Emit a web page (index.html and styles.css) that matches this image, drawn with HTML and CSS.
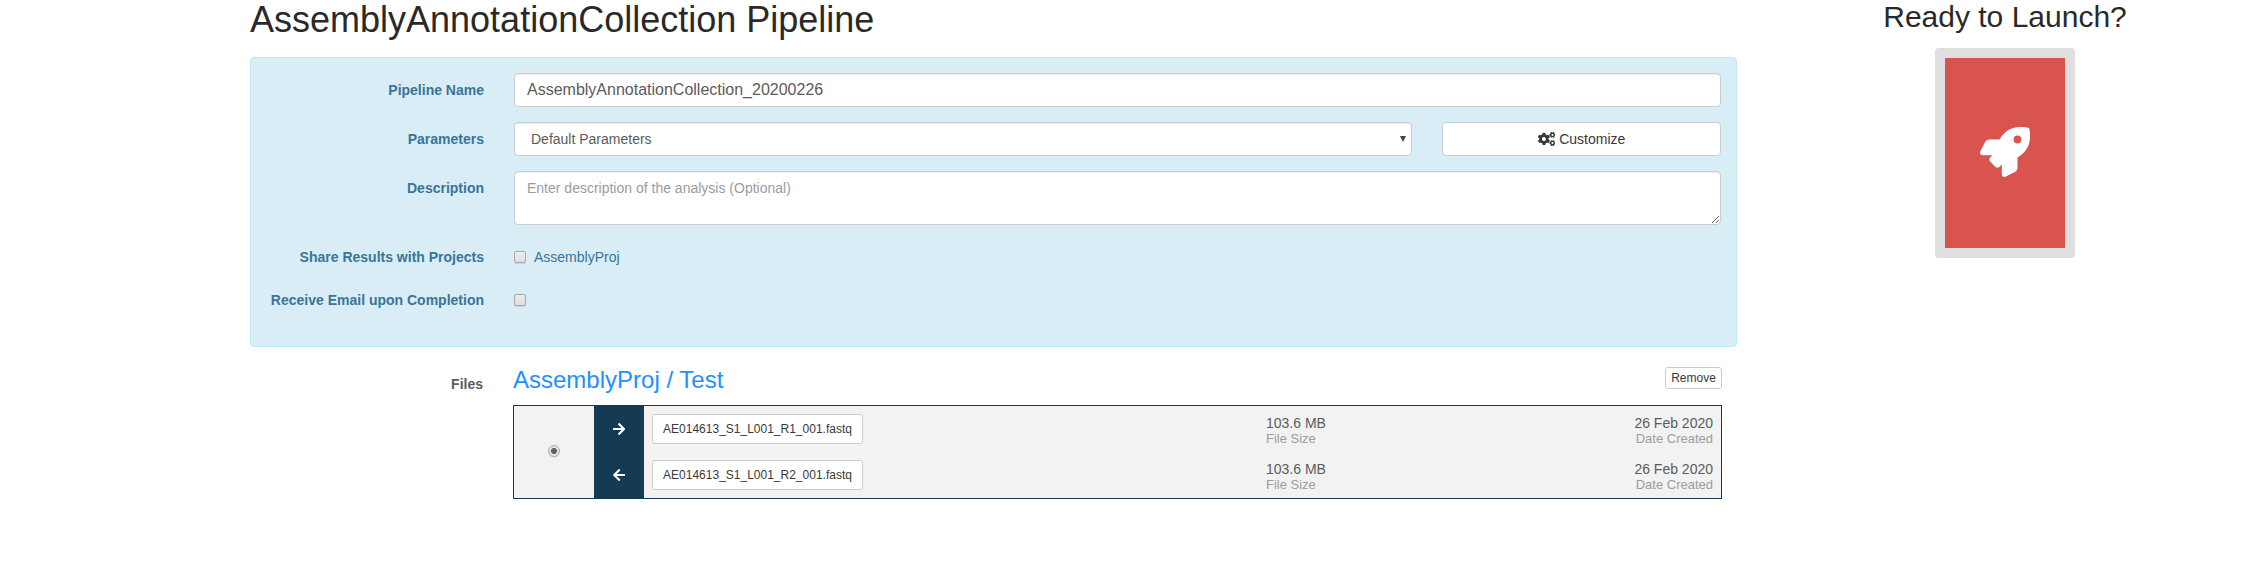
FILE: index.html
```html
<!DOCTYPE html>
<html lang="en">
<head>
<meta charset="utf-8">
<title>AssemblyAnnotationCollection Pipeline</title>
<link rel="stylesheet" href="styles.css">
</head>
<body>
<main class="page">
  <section class="pipeline">
    <h1 class="title">AssemblyAnnotationCollection Pipeline</h1>
    <form class="panel">
      <div class="row">
        <label class="label" for="name">Pipeline Name</label>
        <input class="control control-name" id="name" type="text" value="AssemblyAnnotationCollection_20200226">
      </div>
      <div class="row">
        <span class="label">Parameters</span>
        <div class="split">
          <div class="control select"><span>Default Parameters</span>
            <svg class="caret" viewBox="0 0 6 6"><path d="M0 0h6L3 6z"/></svg>
          </div>
          <button class="btn customize" type="button">
            <svg class="cogs" viewBox="0 0 640 512">
              <path id="small-cog" d="M512.1 191l-8.2 14.3c-3 5.3-9.4 7.5-15.1 5.4-11.8-4.4-22.6-10.7-32.1-18.6-4.6-3.8-5.8-10.5-2.8-15.7l8.2-14.3c-6.9-8-12.3-17.3-15.9-27.4h-16.5c-6 0-11.2-4.3-12.2-10.3-2-12-2.1-24.6 0-37.1 1-6 6.2-10.4 12.2-10.4h16.5c3.6-10.1 9-19.4 15.9-27.4l-8.2-14.3c-3-5.2-1.9-11.9 2.8-15.7 9.5-7.9 20.4-14.2 32.1-18.6 5.7-2.1 12.1.1 15.1 5.4l8.2 14.3c10.5-1.9 21.2-1.9 31.7 0L552 6.3c3-5.3 9.4-7.5 15.1-5.4 11.8 4.4 22.6 10.7 32.1 18.6 4.6 3.8 5.8 10.5 2.8 15.7l-8.2 14.3c6.9 8 12.3 17.3 15.9 27.4h16.5c6 0 11.2 4.3 12.2 10.3 2 12 2.1 24.6 0 37.1-1 6-6.2 10.4-12.2 10.4h-16.5c-3.6 10.1-9 19.4-15.9 27.4l8.2 14.3c3 5.2 1.9 11.9-2.8 15.7-9.5 7.9-20.4 14.2-32.1 18.6-5.7 2.1-12.1-.1-15.1-5.4l-8.2-14.3c-10.4 1.9-21.2 1.9-31.7 0zm-10.5-58.8c38.5 29.6 82.4-14.3 52.8-52.8-38.5-29.7-82.4 14.3-52.8 52.8z"/>
              <use href="#small-cog" y="299"/>
              <path d="M386.3 286.1l33.7 16.8c10.1 5.8 14.5 18.1 10.5 29.1-8.9 24.2-26.4 46.4-42.6 65.8-7.4 8.9-20.2 11.1-30.3 5.3l-29.1-16.8c-16 13.7-34.6 24.6-54.9 31.7v33.6c0 11.6-8.3 21.6-19.7 23.6-24.6 4.2-50.4 4.4-75.9 0-11.5-2-20-11.9-20-23.6V418c-20.3-7.2-38.9-18-54.9-31.7L74 403c-10 5.8-22.9 3.6-30.3-5.3-16.2-19.4-33.3-41.6-42.2-65.7-4-10.9.4-23.2 10.5-29.1l33.3-16.8c-3.9-20.9-3.9-42.4 0-63.4L12 205.8c-10.1-5.8-14.6-18.1-10.5-29 8.9-24.2 26-46.4 42.2-65.8 7.4-8.9 20.2-11.1 30.3-5.3l29.1 16.8c16-13.7 34.6-24.6 54.9-31.7V57.1c0-11.5 8.2-21.5 19.6-23.5 24.6-4.2 50.5-4.4 76-.1 11.5 2 20 11.9 20 23.6v33.6c20.3 7.2 38.9 18 54.9 31.7l29.1-16.8c10-5.8 22.9-3.6 30.3 5.3 16.2 19.4 33.2 41.6 42.1 65.8 4 10.9.1 23.2-10 29.1l-33.7 16.8c3.9 21 3.9 42.5 0 63.5zm-117.6 21.1c59.2-77-28.7-164.9-105.7-105.7-59.2 77 28.7 164.9 105.7 105.7z"/>
            </svg>Customize</button>
        </div>
      </div>
      <div class="row">
        <label class="label" for="description">Description</label>
        <textarea class="control description" id="description" placeholder="Enter description of the analysis (Optional)"></textarea>
      </div>
      <div class="row row-check">
        <span class="label">Share Results with Projects</span>
        <label class="check-line"><input class="check" type="checkbox">AssemblyProj</label>
      </div>
      <div class="row row-check">
        <label class="label" for="email">Receive Email upon Completion</label>
        <div class="check-line"><input class="check" id="email" type="checkbox"></div>
      </div>
    </form>

    <div class="files">
      <span class="label files-label">Files</span>
      <div class="files-body">
        <div class="files-head">
          <h3 class="project">AssemblyProj / Test</h3>
          <button class="btn remove" type="button">Remove</button>
        </div>
        <div class="pair">
          <div class="pick"><input class="radio" type="radio" checked></div>
          <div class="arrows">
            <div class="arrow-cell"><svg class="arrow" viewBox="0 0 448 512"><path d="M190.5 66.9l22.2-22.2c9.4-9.4 24.6-9.4 33.9 0L441 239c9.4 9.4 9.4 24.6 0 33.9L246.6 467.3c-9.4 9.4-24.6 9.4-33.9 0l-22.2-22.2c-9.5-9.5-9.3-25 .4-34.3L311.4 296H24c-13.3 0-24-10.7-24-24v-32c0-13.3 10.7-24 24-24h287.4L190.9 101.2c-9.8-9.3-10-24.8-.4-34.3z"/></svg></div>
            <div class="arrow-cell"><svg class="arrow" viewBox="0 0 448 512"><path d="M257.5 445.1l-22.2 22.2c-9.4 9.4-24.6 9.4-33.9 0L7 273c-9.4-9.4-9.4-24.6 0-33.9L201.4 44.7c9.4-9.4 24.6-9.4 33.9 0l22.2 22.2c9.5 9.5 9.3 25-.4 34.3L136.6 216H424c13.3 0 24 10.7 24 24v32c0 13.3-10.7 24-24 24H136.6l120.5 114.8c9.8 9.3 10 24.8.4 34.3z"/></svg></div>
          </div>
          <div class="entries">
            <div class="entry">
              <div><button class="btn file" type="button">AE014613_S1_L001_R1_001.fastq</button></div>
              <div class="meta">103.6 MB<small>File Size</small></div>
              <div class="meta meta-date">26 Feb 2020<small>Date Created</small></div>
            </div>
            <div class="entry">
              <div><button class="btn file" type="button">AE014613_S1_L001_R2_001.fastq</button></div>
              <div class="meta">103.6 MB<small>File Size</small></div>
              <div class="meta meta-date">26 Feb 2020<small>Date Created</small></div>
            </div>
          </div>
        </div>
      </div>
    </div>
  </section>

  <aside class="launch">
    <h2 class="launch-title">Ready to Launch?</h2>
    <button class="launch-btn" type="button" aria-label="Launch">
      <svg class="rocket" viewBox="0 0 512 512"><path d="M505.12 19.094c-1.189-5.531-6.658-11-12.207-12.188C460.716 0 435.507 0 410.407 0 307.175 0 245.269 55.203 199.052 128H94.838c-16.348.016-35.557 11.875-42.887 26.484L2.516 253.297A28.4 28.4 0 0 0 0 264a24.009 24.009 0 0 0 24.006 24h103.81l-22.474 22.469c-11.366 11.361-12.996 32.258 0 45.25l50.904 50.906c11.156 11.188 32.156 13.156 45.277 0l22.475-22.469V488a24.009 24.009 0 0 0 24.006 24 28.56 28.56 0 0 0 10.707-2.516l98.728-49.39c14.629-7.297 26.508-26.5 26.508-42.86V312.797c72.597-46.313 128.035-108.406 128.035-211.094.093-25.203.093-50.406-6.862-82.609zM384.04 168A40 40 0 1 1 424.05 128 40.023 40.023 0 0 1 384.04 168z"/></svg>
    </button>
  </aside>
</main>
</body>
</html>
```
FILE: styles.css
```css
* {
  box-sizing: border-box;
}

body {
  margin: 0;
  background: #fff;
  color: #5b5b5b;
  font: 14px/20px "Liberation Sans", Arial, sans-serif;
}

button,
input,
textarea {
  margin: 0;
  font-family: inherit;
}

.page {
  display: flex;
  height: 578px;
  padding-left: 250px;
  overflow: hidden;
}

.pipeline {
  flex: none;
  width: 1487px;
}

.title,
.launch-title,
.project {
  margin: 0;
  font-weight: 400;
  white-space: nowrap;
}

.title {
  height: 57px;
  color: #292929;
  font-size: 36px;
  line-height: 40px;
}

.panel {
  display: flex;
  flex-direction: column;
  gap: 15px;
  height: 290px;
  padding: 15px;
  background: #d9edf6;
  border: 1px solid #bce8f1;
  border-radius: 4px;
  color: #377599;
}

.row {
  display: grid;
  grid-template-columns: 218px 1207px;
  column-gap: 30px;
}

.row-check {
  height: 28px;
}

.label {
  padding-top: 7px;
  font-weight: 700;
  text-align: right;
}

.control {
  width: 100%;
  height: 34px;
  padding: 6px 12px;
  background: #fff;
  border: 1px solid #ccc;
  border-radius: 4px;
  box-shadow: inset 0 1px 1px rgba(0, 0, 0, 0.075);
  color: #5b5b5b;
}

.control-name {
  font-size: 16px;
}

.split {
  display: grid;
  grid-template-columns: 898px 279px;
  column-gap: 30px;
}

.select {
  display: flex;
  align-items: center;
  justify-content: space-between;
  padding: 0 5px 0 16px;
}

.caret {
  width: 6px;
  height: 6px;
  fill: #444;
}

.btn {
  background: #fff;
  border: 1px solid #ccc;
  border-radius: 4px;
  color: #393939;
  white-space: nowrap;
}

.customize {
  display: flex;
  align-items: center;
  justify-content: center;
  gap: 4px;
  height: 34px;
  font-size: 14px;
}

.cogs {
  width: 17.5px;
  height: 14px;
  fill: #393939;
}

.description {
  display: block;
  height: 54px;
  font-size: 14px;
  line-height: 20px;
  resize: vertical;
}

.description::placeholder {
  color: #9c9c9c;
}

.check-line {
  display: flex;
  align-items: center;
  gap: 8px;
  height: 20px;
  margin-top: 7px;
}

.check {
  appearance: none;
  width: 12px;
  height: 12px;
  background: linear-gradient(#ededed, #dedede);
  border: 1px solid #aaa;
  border-radius: 2px;
  box-shadow: 0 1px 0 rgba(0, 0, 0, 0.1);
}

.files {
  display: grid;
  grid-template-columns: 233px 1209px;
  column-gap: 30px;
  padding-top: 20px;
}

.files-label {
  padding: 7px 0 0;
}

.files-head {
  display: flex;
  align-items: flex-start;
  justify-content: space-between;
  height: 38px;
}

.project {
  color: #1e90ff;
  font-size: 24px;
  line-height: 26px;
}

.remove {
  width: 57px;
  height: 22px;
  padding: 0;
  border-radius: 3px;
  font-size: 12px;
  line-height: 18px;
}

.pair {
  display: flex;
  height: 94px;
  background: #f2f2f2;
  border: 1px solid #143b53;
}

.pick {
  display: flex;
  align-items: center;
  justify-content: center;
  width: 80px;
  padding-bottom: 2px;
}

.radio {
  appearance: none;
  width: 12px;
  height: 12px;
  background: radial-gradient(circle, #616161 0 2.7px, #e4e4e4 3.3px);
  border: 1px solid #aaa;
  border-radius: 50%;
  box-shadow: 0 1px 0 rgba(0, 0, 0, 0.08);
}

.arrows {
  width: 50px;
  background: #143b53;
}

.arrow-cell {
  display: flex;
  align-items: center;
  justify-content: center;
  height: 46px;
}

.arrow {
  width: 12.25px;
  height: 14px;
  fill: #fff;
}

.entries {
  flex: 1;
}

.entry {
  display: grid;
  grid-template-columns: 614px 1fr 1fr;
  align-items: center;
  height: 46px;
  padding: 0 8px;
}

.file {
  width: 211px;
  height: 30px;
  padding: 0;
  border-radius: 3px;
  font-size: 12px;
}

.meta {
  padding-top: 2px;
  line-height: 16px;
}

.meta small {
  display: block;
  color: #9c9c9c;
  font-size: 13px;
  line-height: 15px;
}

.meta-date {
  text-align: right;
}

.launch {
  display: flex;
  flex: none;
  flex-direction: column;
  align-items: center;
  width: 536px;
}

.launch-title {
  height: 48px;
  color: #292929;
  font-size: 30px;
  line-height: 33px;
}

.launch-btn {
  display: flex;
  align-items: center;
  justify-content: center;
  width: 140px;
  height: 210px;
  padding: 0 0 2px;
  background: #d9534f;
  background-clip: padding-box;
  border: 10px solid #dfdfdf;
  border-radius: 4px;
}

.rocket {
  width: 50px;
  height: 50px;
  fill: #fff;
}
```
